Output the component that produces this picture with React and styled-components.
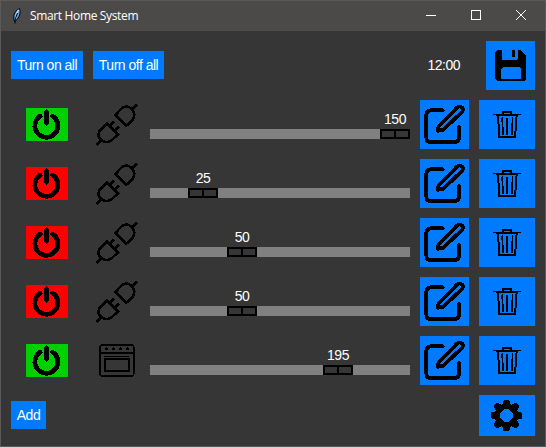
import React from "react";
import styled, { createGlobalStyle } from "styled-components";

const GlobalStyle = createGlobalStyle`
  * { box-sizing: border-box; }
  body { margin: 0; background: #363636; overflow: hidden; }
  svg { display: block; }
`;

const Window = styled.div`
  width: 546px;
  height: 447px;
  display: flex;
  flex-direction: column;
  border: 1px solid #5b5a59;
  background: #363636;
  color: #fff;
  font-family: "Liberation Sans", Arial, sans-serif;
  font-size: 14px;
  letter-spacing: -0.5px;
`;

const TitleBar = styled.header`
  flex: 0 0 30px;
  display: flex;
  align-items: center;
  padding: 0 1px 0 8px;
  background: #4c4a48;
`;

const Title = styled.h1`
  flex: 1;
  margin: 0 0 0 5px;
  font: 400 12px/30px "Open Sans", "Noto Sans", sans-serif;
  letter-spacing: -0.35px;
`;

const WindowControl = styled.button`
  width: ${(p) => p.$width || 45}px;
  height: 30px;
  padding: 0 0 2px;
  display: grid;
  place-items: center;
  border: 0;
  background: none;
  color: #fff;
`;

const Content = styled.main`
  flex: 1;
  display: flex;
  flex-direction: column;
  gap: 10px;
  padding: 10px;
`;

const Bar = styled.div`
  display: flex;
  gap: 10px;
  height: ${(p) => p.$height}px;
`;

const TextButton = styled.button`
  width: ${(p) => p.$width}px;
  height: 28px;
  margin-top: ${(p) => p.$top}px;
  padding: 0;
  border: 0;
  background: #007bff;
  color: #fff;
  font: inherit;
  letter-spacing: inherit;
  line-height: 28px;
  white-space: nowrap;
`;

const Clock = styled.time`
  margin-left: auto;
  padding-right: 16px;
  line-height: 49px;
`;

const IconButton = styled.button`
  flex: none;
  width: ${(p) => p.$width || 49}px;
  height: ${(p) => p.$height || 49}px;
  margin-left: ${(p) => (p.$end ? "auto" : 0)};
  padding: 0;
  border: 0;
  background: #007bff;
  color: #000;
`;

const DeviceRow = styled.section`
  display: grid;
  grid-template-columns: 72px 47px 260px 49px 56px;
  column-gap: 10px;
  height: 49px;
`;

const PowerButton = styled.button`
  place-self: center;
  width: 42px;
  height: 33px;
  padding: 0;
  border: 0;
  background: ${(p) => (p.$on ? "#00d000" : "#ff0000")};
`;

const DeviceIcon = styled.div`
  padding: ${(p) => (p.$oven ? "8px 0 0 6px" : "4px 0 0 3px")};
`;

const Slider = styled.div`
  display: flex;
  flex-direction: column;
  padding-top: 11px;
`;

const SliderValue = styled.output`
  width: 30px;
  height: 18px;
  line-height: 17px;
  text-align: center;
`;

const Track = styled.div`
  height: 10px;
  background: #808080;
`;

const Thumb = styled.div`
  width: 30px;
  height: 10px;
  display: flex;
  justify-content: center;
  border: 2px solid #000;
  background: #363636;
  &::after {
    content: "";
    width: 2px;
    background: #000;
  }
`;

const Feather = () => (
  <svg width="16" height="18" viewBox="0 0 16 18">
    <path d="M5.5 14C3.7 10 5 4 10.5 1.5C12 5 10.7 10.5 6.5 14Z" fill="#5b9bdb" stroke="#000" strokeWidth="1" />
    <path d="M6.5 12C6.5 8 8 5 9.8 2.8" fill="none" stroke="#b9dcf8" strokeWidth="1.2" />
    <path d="M8.5 6L6.2 12L6 16.5" fill="none" stroke="#000" strokeWidth="1" />
  </svg>
);

const PowerIcon = () => (
  <svg width="42" height="33" fill="none" stroke="#000" shapeRendering="crispEdges">
    <path d="M14.2 8.1A11.5 11.5 0 1 0 26.6 8.1" strokeWidth="4.8" strokeLinecap="round" />
    <path d="M17.8 3.5L20.4 .8L23 3.5V15.5L20.4 18L17.8 15.5Z" fill="#000" stroke="none" />
  </svg>
);

const PlugIcon = () => (
  <svg width="43" height="43" viewBox="0.4 0.4 43 43" fill="none" stroke="#000" strokeWidth="2.7" shapeRendering="crispEdges">
    <path d="M19.6 11.5L25.5 5.2C29 2.2 33 2.3 36 5.5C39.2 8.5 39.4 13 37 16.2L30.7 22.2Z" />
    <path d="M11.3 20L4.8 26.2C2.2 30 2.5 34 5.8 36.7C8.5 39 13 39 16 36.8L22.2 30.8Z" />
    <path d="M36 5.8L41.4 .9M6 36.5L1 41.6M14 22.2L18.4 17.8M19.2 27.3L23.5 23" strokeWidth="3" />
  </svg>
);

const OvenIcon = () => (
  <svg width="36" height="33" fill="none" stroke="#000" strokeWidth="1.5" shapeRendering="crispEdges">
    <rect x=".8" y=".8" width="34" height="31.4" rx="3" />
    <path d="M1 9H35" strokeWidth="2" />
    <path d="M5 12.5H30" strokeWidth="1" />
    <rect x="5.8" y="14.8" width="24" height="12" />
    <path d="M6 5H9M13 5H16M20 5H23M27 5H30" strokeWidth="2" />
    <path d="M7 4H8M14 4H15M21 4H22M28 4H29" />
  </svg>
);

const EditIcon = () => (
  <svg width="49" height="49" viewBox="0.5 0.5 49 49" fill="none" stroke="#000" strokeWidth="3.8" strokeLinecap="round" strokeLinejoin="round" shapeRendering="crispEdges">
    <path d="M23.3 10.8H11Q6.8 10.8 6.8 15V38Q6.8 42.5 11 42.5H35Q39.5 42.5 39.5 38V27.5" />
    <path d="M18.3 31.3L18.9 27L37.4 8.2C41 5.2 45 8.7 42.6 12.2L24 30.2Z" strokeWidth="3.7" />
  </svg>
);

const TrashIcon = () => (
  <svg width="56" height="49" fill="none" stroke="#000" shapeRendering="crispEdges">
    <path d="M14.3 14.5H41.7" strokeWidth="1.5" />
    <path d="M17 15.5H39" strokeWidth="1.2" />
    <path d="M24 14.5V12H32V14.5" strokeWidth="1.8" />
    <path d="M19 16L20.4 37H36.1L37.6 16" strokeWidth="2" />
    <path d="M23 17.5L23.8 28V35M33.7 17.5L33 28V35" strokeWidth="1.6" />
    <path d="M28 17.5V35" strokeWidth="2" />
  </svg>
);

const SaveIcon = () => (
  <svg width="49" height="49" shapeRendering="crispEdges">
    <g transform="translate(9 9)">
      <path fillRule="evenodd" d="M2 0H7V8Q7 10 9 10H21Q23 10 23 8V0H25L31 6V29L29 31H2L0 29V2ZM9 17L6 19V29H26V19L24 17Z" />
      <path d="M17 0H20V7H17Z" />
    </g>
  </svg>
);

const teeth = [0, 45, 90, 135, 180, 225, 270, 315];
const GearIcon = () => (
  <svg width="56" height="41" shapeRendering="crispEdges">
    <g transform="translate(27.5 20.5)">
      <circle r="9.1" fill="none" stroke="#000" strokeWidth="5.3" />
      {teeth.map((angle) => (
        <path key={angle} d="M-4.5 -10L-3 -15L-2 -15.6H2L3 -15L4.5 -10Z" transform={`rotate(${angle})`} />
      ))}
    </g>
  </svg>
);

const devices = [
  { id: 1, on: true, value: 150, offset: 230 },
  { id: 2, on: false, value: 25, offset: 38 },
  { id: 3, on: false, value: 50, offset: 77 },
  { id: 4, on: false, value: 50, offset: 77 },
  { id: 5, on: true, value: 195, offset: 173, oven: true },
];

function Device({ on, value, offset, oven }) {
  return (
    <DeviceRow>
      <PowerButton $on={on} aria-label="Power"><PowerIcon /></PowerButton>
      <DeviceIcon $oven={oven}>{oven ? <OvenIcon /> : <PlugIcon />}</DeviceIcon>
      <Slider>
        <SliderValue style={{ marginLeft: offset }}>{value}</SliderValue>
        <Track>
          <Thumb style={{ marginLeft: offset }} />
        </Track>
      </Slider>
      <IconButton aria-label="Edit"><EditIcon /></IconButton>
      <IconButton $width={56} aria-label="Delete"><TrashIcon /></IconButton>
    </DeviceRow>
  );
}

export default function App() {
  return (
    <Window>
      <GlobalStyle />
      <TitleBar>
        <Feather />
        <Title>Smart Home System</Title>
        <WindowControl aria-label="Minimize">
          <svg width="10" height="10" stroke="currentColor"><path d="M0 5.5H10" /></svg>
        </WindowControl>
        <WindowControl aria-label="Maximize">
          <svg width="10" height="10" fill="none" stroke="currentColor"><rect x=".5" y=".5" width="9" height="9" /></svg>
        </WindowControl>
        <WindowControl $width={46} aria-label="Close">
          <svg width="10" height="10" stroke="currentColor"><path d="M0 0L10 10M10 0L0 10" /></svg>
        </WindowControl>
      </TitleBar>
      <Content>
        <Bar $height={49}>
          <TextButton $width={72} $top={10}>Turn on all</TextButton>
          <TextButton $width={71} $top={10}>Turn off all</TextButton>
          <Clock>12:00</Clock>
          <IconButton aria-label="Save"><SaveIcon /></IconButton>
        </Bar>
        {devices.map((device) => <Device key={device.id} {...device} />)}
        <Bar $height={41}>
          <TextButton $width={35} $top={6}>Add</TextButton>
          <IconButton $width={56} $height={41} $end aria-label="Settings"><GearIcon /></IconButton>
        </Bar>
      </Content>
    </Window>
  );
}
